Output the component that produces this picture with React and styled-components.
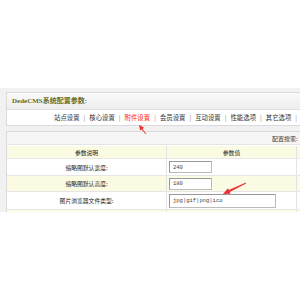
import React from "react";
import styled, { createGlobalStyle } from "styled-components";

const GlobalStyle = createGlobalStyle`
  html, body {
    margin: 0;
    background: #fff;
  }
  body {
    font-family: "Noto Sans CJK SC", "Liberation Sans", sans-serif;
  }
`;

const Page = styled.div`
  position: relative;
  width: 300px;
  height: 300px;
  padding-top: 88px;
  box-sizing: border-box;
  overflow: hidden;
`;
const Panel = styled.div`
  width: 340px;
  height: 124px;
  box-sizing: border-box;
  padding: 4px 0 0 6px;
  background: #f1f1f1;
  overflow: hidden;
`;
const Box = styled.div`
  background: #fff;
  border: 1px solid #dadada;
  margin-bottom: ${props => props.gap || 0}px;
`;
const Title = styled.div`
  height: 16px;
  line-height: 16px;
  padding-left: 5px;
  background: linear-gradient(#fafafa, #ededed);
  border-bottom: 1px solid #e0e0e0;
  color: #6b6b14;
  font-size: 7px;
  font-weight: bold;
  font-family: "Liberation Serif", "Noto Sans CJK SC", serif;
`;
const Tabs = styled.div`
  height: 15px;
  display: flex;
  align-items: center;
  padding-left: 47px;
  font-size: 6.4px;
  color: #333;
`;
const Tab = styled.span`
  color: ${props => (props.active ? "#ff2020" : "#333")};
`;
const Sep = styled.span`
  margin: 0 4px;
  color: #888;
`;
const SearchBar = styled.div`
  height: 12px;
  display: flex;
  align-items: center;
  padding-left: 265px;
  background: #f5f5f5;
  border-bottom: 1px solid #e4e4e4;
  font-size: 6px;
  color: #333;
  margin-bottom: 1px;
`;
const Row = styled.div`
  display: grid;
  grid-template-columns: 160px 130px 1fr;
  height: ${props => props.h}px;
  background: ${props => (props.alt ? "#fbfbe4" : "#fff")};
  border-bottom: 1px solid #e6e6e6;
`;
const Cell = styled.div`
  display: flex;
  align-items: center;
  justify-content: ${props => (props.left ? "flex-start" : "center")};
  padding-left: ${props => (props.left ? "2px" : "0")};
  border-right: 1px solid #e3e3e3;
  font-size: 5.8px;
  color: #222;
`;
const Input = styled.div`
  width: ${props => props.w}px;
  height: ${props => props.h || 12}px;
  box-sizing: border-box;
  border: 1px solid #bbb;
  border-top-color: #999;
  border-left-color: #999;
  background: #fff;
  display: flex;
  align-items: center;
  padding-left: 3px;
  font-size: 5.5px;
  font-family: "Liberation Mono", "DejaVu Sans Mono", monospace;
  color: #444;
`;
const Overlay = styled.svg`
  position: absolute;
  left: 0;
  top: 0;
  pointer-events: none;
`;

const tabs = ["站点设置", "核心设置", "附件设置", "会员设置", "互动设置", "性能选项", "其它选项"];

const App = () => (
  <Page>
    <GlobalStyle />
    <Panel>
      <Box gap={5}>
        <Title>DedeCMS系统配置参数:</Title>
        <Tabs>
          {tabs.map((t, i) => (
            <React.Fragment key={t}>
              {i > 0 && <Sep>|</Sep>}
              <Tab active={t === "附件设置"}>{t}</Tab>
            </React.Fragment>
          ))}
          <Sep>|</Sep>
        </Tabs>
      </Box>
      <Box>
        <SearchBar>配置搜索:</SearchBar>
        <Row h={12} alt>
          <Cell>参数说明</Cell>
          <Cell>参数值</Cell>
          <Cell />
        </Row>
        <Row h={16}>
          <Cell>缩略图默认宽度:</Cell>
          <Cell left>
            <Input w={43}>240</Input>
          </Cell>
          <Cell />
        </Row>
        <Row h={15} alt>
          <Cell>缩略图默认高度:</Cell>
          <Cell left>
            <Input w={43}>180</Input>
          </Cell>
          <Cell />
        </Row>
        <Row h={17}>
          <Cell>图片浏览器文件类型:</Cell>
          <Cell left>
            <Input w={107} h={14}>jpg|gif|png|ico</Input>
          </Cell>
          <Cell />
        </Row>
        <Row h={16} alt>
          <Cell />
          <Cell />
          <Cell />
        </Row>
      </Box>
    </Panel>
    <Overlay width="300" height="300" viewBox="0 0 300 300">
      <polygon
        fill="#f03030"
        points="139,125 144,127.4 142.5,129 146.3,133.8 145.7,134.2 141.6,129.6 140.1,130.5"
      />
      <polygon
        fill="#f03030"
        points="223,194 230.6,193.7 229.8,192.1 246.1,183.4 245.9,182.6 228.8,189.9 228,188.3"
      />
    </Overlay>
  </Page>
);

export default App;
